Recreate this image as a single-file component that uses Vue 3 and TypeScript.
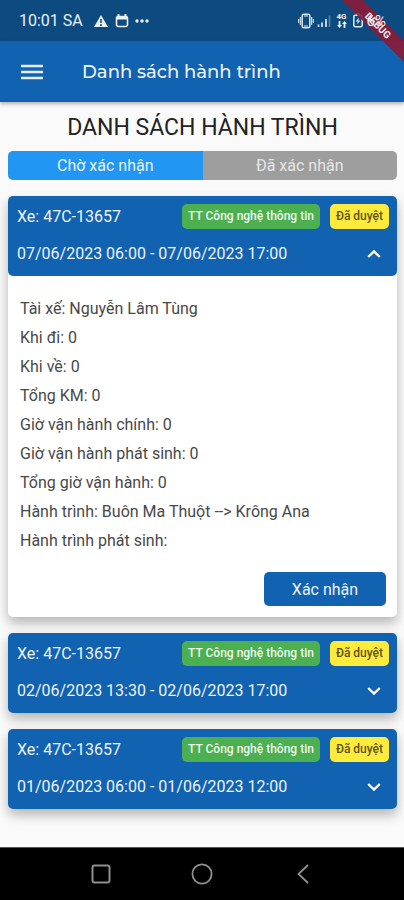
<script setup lang="ts">
import { ref } from 'vue'

interface Trip {
  id: number
  plate: string
  unit: string
  status: string
  from: string
  to: string
  details: { label: string; value: string }[]
}

const details = [
  { label: 'Tài xế', value: 'Nguyễn Lâm Tùng' },
  { label: 'Khi đi', value: '0' },
  { label: 'Khi về', value: '0' },
  { label: 'Tổng KM', value: '0' },
  { label: 'Giờ vận hành chính', value: '0' },
  { label: 'Giờ vận hành phát sinh', value: '0' },
  { label: 'Tổng giờ vận hành', value: '0' },
  { label: 'Hành trình', value: 'Buôn Ma Thuột --> Krông Ana' },
  { label: 'Hành trình phát sinh', value: '' },
]

const trips: Trip[] = [
  { id: 1, plate: '47C-13657', unit: 'TT Công nghệ thông tin', status: 'Đã duyệt', from: '07/06/2023 06:00', to: '07/06/2023 17:00', details },
  { id: 2, plate: '47C-13657', unit: 'TT Công nghệ thông tin', status: 'Đã duyệt', from: '02/06/2023 13:30', to: '02/06/2023 17:00', details },
  { id: 3, plate: '47C-13657', unit: 'TT Công nghệ thông tin', status: 'Đã duyệt', from: '01/06/2023 06:00', to: '01/06/2023 12:00', details },
]

const tabs = ['Chờ xác nhận', 'Đã xác nhận']
const activeTab = ref(0)
const openId = ref<number | null>(1)

function toggle(id: number): void {
  openId.value = openId.value === id ? null : id
}
</script>

<template>
  <div class="screen">
    <div class="status-bar">
      <span class="clock">10:01 SA</span>
      <svg class="warn" width="14" height="14" viewBox="0 0 14 14" aria-hidden="true">
        <path d="M7 1 14 13H0Z" fill="#eaf1f7" />
        <path d="M7 5v4M7 10v2" stroke="#0d4a80" stroke-width="1.5" />
      </svg>
      <svg class="cal" width="14" height="14" viewBox="0 0 14 14" aria-hidden="true">
        <path d="M3.5 0v3M10.5 0v3" stroke="#eaf1f7" stroke-width="2" />
        <rect x="1.5" y="2.5" width="11" height="10" rx="2" fill="none" stroke="#eaf1f7" stroke-width="1.6" />
        <path d="M1.5 4h11" stroke="#eaf1f7" stroke-width="3" />
      </svg>
      <svg class="dots" width="14" height="14" viewBox="0 0 14 14" aria-hidden="true">
        <circle cx="2" cy="7" r="1.7" fill="#eaf1f7" />
        <circle cx="7" cy="7" r="1.7" fill="#eaf1f7" />
        <circle cx="12" cy="7" r="1.7" fill="#eaf1f7" />
      </svg>
      <span class="spacer"></span>
      <svg class="vibrate" width="16" height="16" viewBox="0 0 16 16" fill="none" stroke="#dfe9f2" aria-hidden="true">
        <rect x="4.2" y="1.2" width="7.6" height="13.6" rx="1.5" stroke-width="1.5" />
        <path d="M6 3h4M6 13h4" stroke-width="1.2" />
        <path d="M2.3 4v8M.6 6v4M13.7 4v8M15.4 6v4" stroke-width="1.1" />
      </svg>
      <svg class="signal" width="14" height="14" viewBox="0 0 14 14" aria-hidden="true">
        <path d="M1.5 10.5v2.500M5 8.500v4.500M9 5v8" stroke="#cfdeeb" stroke-width="1.8" />
        <path d="M12.500 1.500v11.500" stroke="#5784aa" stroke-width="1.6" />
      </svg>
      <span class="network">
        <span>4G</span>
        <svg width="10" height="7" viewBox="0 0 10 7" aria-hidden="true">
          <path d="M0 4 2.500 7 5 4H3.400V0H1.600V4ZM5 3 7.500 0 10 3H8.400V7H6.600V3Z" fill="#eaf1f7" />
        </svg>
      </span>
      <svg class="battery" width="10" height="15" viewBox="0 0 10 15" aria-hidden="true">
        <rect x="3" y="0" width="4" height="2" fill="#dfe9f2" />
        <rect x=".8" y="2.200" width="8.400" height="11.500" rx="1.500" fill="none" stroke="#dfe9f2" stroke-width="1.500" />
        <path d="M5.800 4.500 2.800 8.500h2L4.200 11.500l3-4h-2Z" fill="#eaf1f7" />
      </svg>
      <span class="percent">6%</span>
    </div>

    <header class="app-bar">
      <button class="menu" type="button" aria-label="Menu">
        <svg width="22" height="16" viewBox="0 0 22 16" aria-hidden="true">
          <path d="M0 2h22M0 8h22M0 14h22" stroke="#e8eff8" stroke-width="2.400" />
        </svg>
      </button>
      <h1>Danh sách hành trình</h1>
    </header>

    <div class="banner-corner"><span class="banner">DEBUG</span></div>

    <main>
      <h2>DANH SÁCH HÀNH TRÌNH</h2>

      <div class="tabs" role="tablist">
        <button
          v-for="(tab, i) in tabs"
          :key="tab"
          type="button"
          role="tab"
          :aria-selected="activeTab === i"
          :class="{ active: activeTab === i }"
          @click="activeTab = i"
        >{{ tab }}</button>
      </div>

      <article v-for="trip in trips" :key="trip.id" class="card">
        <button class="card-head" type="button" :aria-expanded="openId === trip.id" @click="toggle(trip.id)">
          <span class="row">
            <span class="plate">Xe: {{ trip.plate }}</span>
            <span class="tag unit">{{ trip.unit }}</span>
            <span class="tag status">{{ trip.status }}</span>
          </span>
          <span class="row">
            <span class="time">{{ trip.from }} - {{ trip.to }}</span>
            <svg class="chevron" :class="{ up: openId === trip.id }" width="14" height="10" viewBox="0 0 14 10" aria-hidden="true">
              <path d="M1.200 2 7 7.600 12.800 2" fill="none" stroke="#fff" stroke-width="2.400" />
            </svg>
          </span>
        </button>
        <div v-if="openId === trip.id" class="card-body">
          <p v-for="d in trip.details" :key="d.label">{{ d.label }}: {{ d.value }}</p>
          <button class="confirm" type="button">Xác nhận</button>
        </div>
      </article>
    </main>

    <nav class="nav-bar" aria-label="System">
      <button type="button" aria-label="Recent apps">
        <svg width="22" height="22" viewBox="0 0 22 22" fill="none" stroke="#8f8f8f" stroke-width="2" aria-hidden="true">
          <rect x="2.500" y="2.500" width="17" height="17" rx="2" />
        </svg>
      </button>
      <button type="button" aria-label="Home">
        <svg width="22" height="22" viewBox="0 0 22 22" fill="none" stroke="#8f8f8f" stroke-width="1.800" aria-hidden="true">
          <circle cx="11" cy="11" r="9.600" />
        </svg>
      </button>
      <button type="button" aria-label="Back">
        <svg width="22" height="22" viewBox="0 0 22 22" fill="none" stroke="#8f8f8f" stroke-width="1.800" aria-hidden="true">
          <path d="M16 2 6.500 11 16 20" />
        </svg>
      </button>
    </nav>
  </div>
</template>

<style>
body {
  margin: 0;
  background: #fafafa;
}
</style>

<style scoped>
.screen {
  position: relative;
  display: flex;
  flex-direction: column;
  min-height: 100vh;
  background: #fafafa;
  color: #484848;
  font-family: Roboto, "Noto Sans", sans-serif;
  font-size: 16px;
}

button {
  margin: 0;
  padding: 0;
  border: 0;
  background: none;
  color: inherit;
  font: inherit;
  cursor: pointer;
}

svg {
  display: block;
  flex: none;
}

.status-bar {
  display: flex;
  align-items: center;
  height: 41px;
  padding: 0 18px 0 19px;
  background: #0d4a80;
  color: #eaf1f7;
}

.clock {
  margin-right: 11px;
}

.cal {
  margin: 0 6px 0 7px;
}

.spacer {
  flex: 1;
}

.signal {
  margin: 0 6px 0 3px;
}

.network {
  display: flex;
  flex-direction: column;
  align-items: center;
  font-size: 8px;
  font-weight: 700;
  line-height: 8px;
}

.battery {
  margin: 0 4px 0 6px;
}

.percent {
  position: relative;
  z-index: 3;
  font-size: 15px;
}

.app-bar {
  z-index: 1;
  display: flex;
  align-items: center;
  gap: 39px;
  height: 61px;
  padding: 0 21px;
  background: #1162b1;
  box-shadow: 0 2px 4px rgba(0, 0, 0, 0.3);
}

h1 {
  margin: 0;
  color: #eef4fb;
  font-family: Montserrat, Inter, sans-serif;
  font-size: 18px;
  font-weight: 500;
}

.banner-corner {
  position: absolute;
  top: 0;
  right: 0;
  z-index: 2;
  width: 64px;
  height: 64px;
  overflow: hidden;
  pointer-events: none;
}

.banner {
  position: absolute;
  top: 18px;
  right: -34px;
  width: 120px;
  background: rgba(138, 28, 54, 0.9);
  color: #eee;
  font-size: 10px;
  font-weight: 700;
  line-height: 15px;
  text-align: center;
  transform: rotate(45deg);
}

main {
  flex: 1;
  padding: 10px 7px 32px 8px;
}

h2 {
  margin: 0 0 7px;
  color: #222;
  font-size: 23px;
  font-weight: 400;
  line-height: 32px;
  text-align: center;
}

.tabs {
  display: flex;
  margin-bottom: 16px;
  border-radius: 5px;
  overflow: hidden;
}

.tabs button {
  flex: 1;
  height: 29px;
  background: #9e9e9e;
  color: #e6e6e6;
}

.tabs .active {
  background: #2196f3;
  color: #e8f4fe;
}

.card {
  border-radius: 5px;
  background: #fff;
  box-shadow: 0 6px 12px rgba(0, 0, 0, 0.28);
}

.card + .card {
  margin-top: 16px;
}

.card-head {
  display: flex;
  flex-direction: column;
  gap: 12px;
  width: 100%;
  padding: 8px 8px 10px 9px;
  border-radius: 5px;
  background: #1162b1;
  color: #eef4fb;
  text-align: left;
}

.row {
  display: flex;
  align-items: center;
  width: 100%;
  height: 25px;
}

.plate,
.time {
  flex: 1;
}

.tag {
  padding: 0 6px;
  border-radius: 5px;
  font-size: 12px;
  font-weight: 500;
  line-height: 25px;
}

.unit {
  margin-right: 10px;
  background: #4caf50;
  color: #eef8ee;
}

.status {
  background: #ffeb3b;
  color: #5c541c;
}

.chevron {
  margin-right: 8px;
}

.chevron.up {
  transform: rotate(180deg);
}

.card-body {
  display: flex;
  flex-direction: column;
  padding: 18px 11px 11px 12px;
}

.card-body p {
  margin: 0;
  line-height: 29px;
}

.confirm {
  align-self: flex-end;
  width: 122px;
  height: 34px;
  margin-top: 17px;
  border-radius: 5px;
  background: #1162b1;
  color: #eef4fb;
}

.nav-bar {
  display: grid;
  grid-template-columns: repeat(3, 101px);
  justify-content: center;
  justify-items: center;
  align-items: center;
  height: 52px;
  border-top: 1px solid #555;
  background: #000;
}
</style>
